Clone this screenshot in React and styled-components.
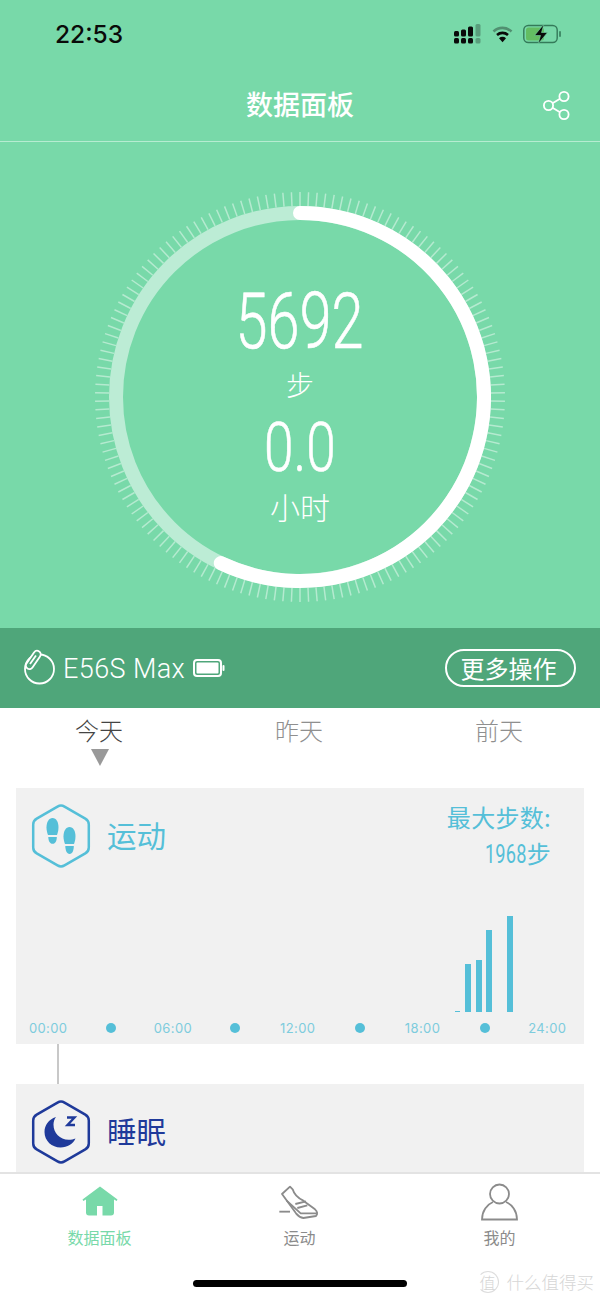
import React from "react";
import styled, { createGlobalStyle } from "styled-components";

const CJK = `"Noto Sans CJK SC", "Noto Sans", sans-serif`;
const GREEN = "#78d9a9";
const BLUE = "#55bfd8";
const NAVY = "#1f3a9a";

const Global = createGlobalStyle`
  html, body { margin: 0; padding: 0; background: #fff; }
  * { box-sizing: border-box; }
`;

const Screen = styled.div`
  position: relative; width: 600px; height: 1298px; overflow: hidden;
  display: flex; flex-direction: column; background: #fff; font-family: ${CJK};
`;
const Top = styled.header`
  height: 142px; background: ${GREEN}; border-bottom: 1px solid #b6ecd1; flex: none;
  display: flex; flex-direction: column;
`;
const StatusBar = styled.div`
  height: 68px; display: flex; align-items: center; padding: 0 38px 0 55px; gap: 10px;
`;
const Clock = styled.span`
  font: 500 24.5px Inter, "Liberation Sans", sans-serif; color: #0a0a0a; margin-right: auto; margin-top: -1px;
`;
const StatusIcon = styled.svg`
  display: block; flex: none; margin-top: -1px;
`;
const NavBar = styled.div`
  flex: 1; display: flex; align-items: center; justify-content: center; position: relative; padding-bottom: 2px;
`;
const NavTitle = styled.h1`
  margin: 0; font: 500 27px/1 ${CJK}; color: #fff;
`;
const ShareBtn = styled.div`
  position: absolute; right: 28px; top: 22px; width: 30px; height: 30px;
`;
const Hero = styled.section`
  height: 486px; flex: none; background: ${GREEN}; padding-top: 45px; display: flex; justify-content: center;
`;
const Gauge = styled.div`
  position: relative; width: 420px; height: 420px;
`;
const GaugeText = styled.div`
  position: absolute; inset: 0; padding-top: 100px; display: flex; flex-direction: column; align-items: center; color: #fff;
`;
const BigNumber = styled.div`
  font: 300 ${p => p.$size}px/${p => p.$line}px Roboto, sans-serif; -webkit-text-stroke: .6px #fff;
  height: ${p => p.$line}px; margin-top: ${p => p.$top || 0}px; transform: scaleX(${p => p.$sx});
`;
const Unit = styled.div`
  font: 300 ${p => p.$size}px/40px ${CJK}; height: 40px; margin-top: ${p => p.$top}px;
`;
const DeviceBar = styled.div`
  height: 80px; flex: none; background: #4fa67a; display: flex; align-items: center; padding: 0 24px; color: #fff;
`;
const DeviceName = styled.span`
  font: 300 27px/1 Roboto, sans-serif; margin: 2px 9px 0 8px; letter-spacing: .4px;
`;
const MoreBtn = styled.button`
  margin-left: auto; width: 131px; height: 38px; border: 2px solid #fff; border-radius: 19px; background: none;
  color: #fff; font: 400 24px/1 ${CJK}; padding: 0 4px 0 0;
`;
const Tabs = styled.nav`
  height: 80px; flex: none; display: grid; grid-template-columns: repeat(3, 200px);
`;
const DayTab = styled.div`
  display: flex; flex-direction: column; align-items: center; padding-top: 4px; margin-left: -2px;
  font: 300 24px/36px ${CJK}; color: ${p => (p.$active ? "#444" : "#8f8f8f")};
`;
const Pointer = styled.i`
  display: block; width: 0; height: 0; margin-top: 1px; margin-left: 2px;
  border-left: 9px solid transparent; border-right: 9px solid transparent; border-top: 17px solid #999;
`;
const Content = styled.main`
  flex: 1; min-height: 0; overflow: hidden; padding: 0 16px; display: flex; flex-direction: column; align-items: stretch;
`;
const Panel = styled.section`
  flex: none; background: #f1f1f1; height: ${p => p.$h}px; display: flex; flex-direction: column;
`;
const PanelHead = styled.div`
  height: 96px; flex: none; display: flex; align-items: flex-start; padding: 16px 33px 0 15px; gap: 16px;
`;
const PanelTitle = styled.h2`
  margin: 0; font: 400 29.5px/60px ${CJK}; color: ${p => p.$color};
`;
const MaxInfo = styled.div`
  margin-left: auto; margin-top: -5px; text-align: right; color: ${BLUE}; font: 400 24px/36px ${CJK};
  letter-spacing: .3px;
`;
const Condensed = styled.span`
  display: inline-block; font: 400 26px/34px Roboto, sans-serif; transform: scaleX(.7); transform-origin: right center; margin-left: -20px;
`;
const Chart = styled.div`
  width: 504px; height: 128px; margin-left: 27px; display: flex; align-items: flex-end; flex: none;
`;
const Slot = styled.div`
  flex: 1; display: flex; justify-content: center;
`;
const Bar = styled.div`
  background: ${BLUE}; width: ${p => (p.$tiny ? 5 : 6)}px;
`;
const Axis = styled.div`
  display: grid; grid-template-columns: repeat(9, 62.4px); margin-left: 1px; align-items: center; justify-items: center; height: 32px; flex: none;
`;
const AxisLabel = styled.span`
  font: 400 13px/1 Inter, sans-serif; letter-spacing: .4px; color: #7dccdd;
`;
const AxisDot = styled.i`
  width: 10px; height: 10px; border-radius: 50%; background: ${BLUE};
`;
const Connector = styled.div`
  width: 2px; height: 40px; background: #c8c8c8; margin-left: 41px; flex: none;
`;
const TabBar = styled.footer`
  height: 126px; flex: none; background: #fff; border-top: 2px solid #e3e3e3;
  display: grid; grid-template-columns: repeat(3, 200px); position: relative;
`;
const TabItem = styled.div`
  display: flex; flex-direction: column; align-items: center; height: 76px; padding-top: 6px;
  font: 400 16px/20px ${CJK}; color: ${p => (p.$active ? GREEN : "#8b8b8b")};
`;
const TabIcon = styled.svg`
  display: block; width: 60px; height: 45px; flex: none;
`;
const TabLabel = styled.span`
  margin-top: 2px; margin-left: -1px;
`;
const HomeIndicator = styled.div`
  position: absolute; left: 193px; top: 106px; width: 214px; height: 7px; border-radius: 4px; background: #000;
`;
const Watermark = styled.div`
  position: absolute; right: 6px; top: 96px; display: flex; align-items: center; gap: 8px;
  color: #d6d6d6; font: 300 17.500px/24px ${CJK};
`;
const WatermarkSeal = styled.span`
  width: 22px; height: 22px; border-radius: 50%; border: 1px solid #ddd; border-left-color: transparent;
  display: flex; align-items: center; justify-content: center; font-size: 16px; line-height: 1;
`;

const C = 210;
const polar = (r, deg) => {
  const a = ((deg - 90) * Math.PI) / 180;
  return [C + r * Math.cos(a), C + r * Math.sin(a)];
};
const ticks = Array.from({ length: 150 }, (_, i) => i * 2.4);
const arc = (r, from, to) => {
  const [x1, y1] = polar(r, from);
  const [x2, y2] = polar(r, to);
  return `M${x1} ${y1}A${r} ${r} 0 ${to - from > 180 ? 1 : 0} 1 ${x2} ${y2}`;
};

const GaugeDial = () => (
  <svg width="420" height="420" viewBox="0 0 420 420" style={{ display: "block" }}>
    {ticks.map(d => {
      const [x1, y1] = polar(191, d);
      const [x2, y2] = polar(205, d);
      return <line key={d} x1={x1} y1={y1} x2={x2} y2={y2} stroke="#fff" strokeOpacity=".45" strokeWidth="1.500" />;
    })}
    <circle cx={C} cy={C} r="184" fill="none" stroke="#bcecd5" strokeWidth="14" />
    <path d={arc(184, 0, 205.5)} fill="none" stroke="#fff" strokeWidth="14" strokeLinecap="round" />
  </svg>
);

const Hexagon = ({ color, children }) => (
  <svg width="60" height="64" viewBox="0 0 60 64" style={{ display: "block", flex: "none" }}>
    <path d="M26.500 2.600a7 7 0 0 1 7 0l20.800 12a7 7 0 0 1 3.500 6v22.800a7 7 0 0 1-3.500 6l-20.800 12a7 7 0 0 1-7 0l-20.800-12a7 7 0 0 1-3.500-6V20.600a7 7 0 0 1 3.500-6z" fill="none" stroke={color} strokeWidth="2.500" />
    {children}
  </svg>
);

const Footprints = () => (
  <g fill={BLUE}>
    <path d="M21.500 14c3.800 0 6 4 6 9.500 0 3.200-.9 5.800-1.500 7.500h-9c-.7-1.800-1.500-4.300-1.500-7.500 0-5.500 2.400-9.500 6-9.500z" />
    <path d="M17.300 33h8.500c0 3.700-1.200 6.800-4.200 6.800S17.300 36.700 17.300 33z" />
    <path d="M38.500 23c3.800 0 6 4 6 9.500 0 3.200-.9 5.800-1.500 7.500h-9c-.7-1.800-1.500-4.300-1.500-7.500 0-5.500 2.400-9.500 6-9.500z" />
    <path d="M34.300 42h8.500c0 3.700-1.200 8-4.200 8s-4.300-4.300-4.300-8z" />
  </g>
);

const Moon = () => (
  <g>
    <path d="M25 17C17.500 19.300 13.500 25.500 13.500 32c0 9 7.500 15.500 16 15.500 7 0 12.500-3.500 15-9-2 .9-4.300 1.300-6.800 1.300-9 0-15.200-7-15.200-15 0-2.500 .7-5.600 2.500-7.800z" fill={NAVY} />
    <path d="M36 17.500h7.500L36.500 25H44" fill="none" stroke={NAVY} strokeWidth="2.400" />
  </g>
);

const chartData = { 39: 1, 40: 48, 41: 52, 42: 82, 44: 96 };
const axis = ["00:00", null, "06:00", null, "12:00", null, "18:00", null, "24:00"];

export default function App() {
  return (
    <Screen>
      <Global />
      <Top>
        <StatusBar>
          <Clock>22:53</Clock>
          <StatusIcon width="28" height="20" viewBox="0 0 28 20">
            <g fill="#0a0a0a">
              <rect x="0" y="7" width="5" height="5.500" rx="1.500" /><rect x="0" y="14" width="5" height="5.500" rx="1.500" />
              <rect x="7" y="5.500" width="5" height="7" rx="1.500" /><rect x="7" y="14" width="5" height="5.500" rx="1.500" />
              <rect x="14" y="2.500" width="5" height="10" rx="1.500" /><rect x="14" y="14" width="5" height="5.500" rx="1.500" />
            </g>
            <g fill="#0a0a0a" opacity=".28">
              <rect x="21.500" y="0" width="5" height="12.500" rx="1.500" /><rect x="21.500" y="14" width="5" height="5.500" rx="1.500" />
            </g>
          </StatusIcon>
          <StatusIcon width="21" height="18" viewBox="0 0 21 18">
            <path d="M1.500 6.500a13 13 0 0 1 18 0" fill="none" stroke="#0a0a0a" strokeOpacity=".35" strokeWidth="2.600" />
            <path d="M5 10a8.300 8.300 0 0 1 11 0" fill="none" stroke="#0a0a0a" strokeWidth="2.600" />
            <path d="M7 13.200a5 5 0 0 1 7 0l-3.500 4z" fill="#0a0a0a" />
          </StatusIcon>
          <StatusIcon width="39" height="20" viewBox="0 0 39 20">
            <rect x=".8" y="1.500" width="33.400" height="17" rx="4.500" fill="none" stroke="#1d5a3f" strokeOpacity=".75" strokeWidth="1.400" />
            <rect x="3" y="3.500" width="18" height="13" rx="2.500" fill="#63bd62" />
            <rect x="36" y="7" width="2" height="6" rx="1" fill="#1d5a3f" fillOpacity=".6" />
            <path d="M21 0 11.500 11.500h6l-2.500 8.500 9.500-11.500h-6z" fill="#0a0a0a" stroke={GREEN} strokeWidth=".6" />
          </StatusIcon>
        </StatusBar>
        <NavBar>
          <NavTitle>数据面板</NavTitle>
          <ShareBtn>
            <svg width="30" height="30" viewBox="0 0 30 30" fill="none" stroke="#fff" strokeWidth="1.800">
              <circle cx="22" cy="6.500" r="4.600" /><circle cx="6.500" cy="15.500" r="4.600" /><circle cx="22" cy="24.500" r="4.600" />
              <path d="M10.500 13.200 18 8.800M10.500 17.800l7.500 4.400" />
            </svg>
          </ShareBtn>
        </NavBar>
      </Top>
      <Hero>
        <Gauge>
          <GaugeDial />
          <GaugeText>
            <BigNumber $size={78} $line={70} $sx={0.74}>5692</BigNumber>
            <Unit $size={28} $top={7}>步</Unit>
            <BigNumber $size={68} $line={60} $sx={0.78} $top={14}>0.0</BigNumber>
            <Unit $size={30} $top={8}>小时</Unit>
          </GaugeText>
        </Gauge>
      </Hero>
      <DeviceBar>
        <svg width="31" height="36" viewBox="0 0 31 36" fill="none" stroke="#fff" strokeWidth="1.800" style={{ flex: "none", marginTop: "-3px" }}>
          <circle cx="15.500" cy="20" r="14.500" />
          <path d="M2.500 14.500 10 3.500c1.300-1.800 3.500-2.200 5.200-1 1.700 1.100 2 3.300.8 5L8.500 18.500c-1.200 1.700-3.400 2.100-5 1-1.700-1.100-2.200-3.300-1-5z" fill="#4fa67a" />
          <path d="M6 15 12 6.500" />
        </svg>
        <DeviceName>E56S Max</DeviceName>
        <svg width="32" height="18" viewBox="0 0 32 18" style={{ flex: "none", marginLeft: "-1px" }}>
          <rect x="1" y="1" width="27" height="16" rx="3" fill="none" stroke="#fff" strokeWidth="2" />
          <rect x="3.500" y="3.500" width="22" height="11" rx="1" fill="#fff" />
          <rect x="29.500" y="6" width="2" height="6" rx="1" fill="#fff" />
        </svg>
        <MoreBtn>更多操作</MoreBtn>
      </DeviceBar>
      <Tabs>
        <DayTab $active>今天<Pointer /></DayTab>
        <DayTab>昨天</DayTab>
        <DayTab>前天</DayTab>
      </Tabs>
      <Content>
        <Panel $h={256}>
          <PanelHead>
            <Hexagon color={BLUE}><Footprints /></Hexagon>
            <PanelTitle $color={BLUE}>运动</PanelTitle>
            <MaxInfo>
              <div>最大步数:</div>
              <div><Condensed>1968</Condensed>步</div>
            </MaxInfo>
          </PanelHead>
          <Chart>
            {Array.from({ length: 48 }, (_, i) => (
              <Slot key={i}>{chartData[i] ? <Bar $tiny={chartData[i] < 2} style={{ height: chartData[i] }} /> : null}</Slot>
            ))}
          </Chart>
          <Axis>
            {axis.map((t, i) => (t ? <AxisLabel key={i}>{t}</AxisLabel> : <AxisDot key={i} />))}
          </Axis>
        </Panel>
        <Connector />
        <Panel $h={120}>
          <PanelHead>
            <Hexagon color={NAVY}><Moon /></Hexagon>
            <PanelTitle $color={NAVY}>睡眠</PanelTitle>
          </PanelHead>
        </Panel>
      </Content>
      <TabBar>
        <TabItem $active>
          <TabIcon viewBox="-5 0 60 45">
            <path d="M25 6.500 7.500 19.500l.8 1.500 2.700-1.500V32.500a3 3 0 0 0 3 3h8V26h5.500v9.500h8.500a3 3 0 0 0 3-3V19.500l2.700 1.500.8-1.500z" fill={GREEN} />
          </TabIcon>
          <TabLabel>数据面板</TabLabel>
        </TabItem>
        <TabItem>
          <TabIcon viewBox="0 0 180 135" fill="none" stroke="#8b8b8b" strokeWidth="5.500" strokeLinejoin="round">
            <path d="M36 42 60 20l8 8c4 14 17 27 32 34l35 26q11 10 3 20l-38 6q-12-2-22-14z" />
            <path d="M50 62 92 100h48M76 72l32-8M82 84l30-8" />
            <path d="M28 95h32" />
          </TabIcon>
          <TabLabel>运动</TabLabel>
        </TabItem>
        <TabItem>
          <TabIcon viewBox="0 0 60 45" fill="none" stroke="#8b8b8b" strokeWidth="1.800">
            <circle cx="29.500" cy="14" r="9.500" />
            <path d="M23 22c-6 2.500-11 9-11 17.500h35C47 31 42 24.500 36 22" />
          </TabIcon>
          <TabLabel>我的</TabLabel>
        </TabItem>
        <HomeIndicator />
        <Watermark>
          <WatermarkSeal>值</WatermarkSeal>
          <span>什么值得买</span>
        </Watermark>
      </TabBar>
    </Screen>
  );
}
